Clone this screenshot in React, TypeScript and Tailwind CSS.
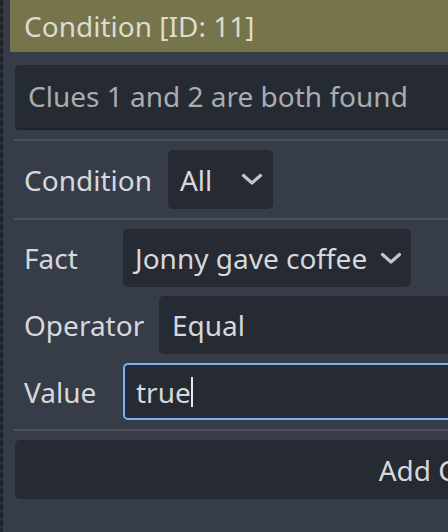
const Chevron = () => (
	<svg width="22" height="13" viewBox="0 0 22 13" fill="none">
		<path d="M2.5 2.5 L11 10 L19.5 2.5" stroke="#c3c5c9" strokeWidth="3.2" strokeLinecap="round" strokeLinejoin="round" />
	</svg>
);

const Row = ({ label, children }: { label: string; children: React.ReactNode }) => (
	<div className="flex items-center mt-[9px] ml-[14px] gap-[16px]">
		<div className="min-w-[83px] text-[#d6d8dc]">{label}</div>
		{children}
	</div>
);

const App = () => {
	return (
		<div className="flex w-[448px] h-[532px] overflow-hidden bg-[#373c49] font-['Noto_Sans',sans-serif] text-[28px]">
			<div className="w-[3px] shrink-0 bg-[repeating-linear-gradient(to_bottom,#22262d_0px,#22262d_7px,#333845_7px,#333845_8px)]"></div>
			<div className="flex flex-col w-[930px] shrink-0 ml-[7px]">
				<div className="h-[52px] flex items-center pl-[14px] bg-[#76744a] text-[#dddbd0]">
					Condition [ID: 11]
				</div>

				<div className="mt-[13px] ml-[5px] h-[65px] flex items-center pl-[13px] pb-[1px] bg-[#262a32] rounded-[4px] border-b-2 border-[#20232a] text-[#a9acb1]">
					Clues 1 and 2 are both found
				</div>

				<div className="mt-[9px] ml-[4px] h-[2px] bg-[#4b515d]"></div>

				<Row label="Condition">
					<div className="w-[105px] h-[59px] flex items-center justify-between pl-[12px] pr-[10px] bg-[#262a32] rounded-[5px] text-[#d6d8dc]">
						<span>All</span>
						<Chevron />
					</div>
				</Row>

				<div className="mt-[9px] ml-[4px] h-[2px] bg-[#4b515d]"></div>

				<Row label="Fact">
					<div className="w-[288px] h-[58px] flex items-center justify-between pl-[12px] pr-[9px] bg-[#262a32] rounded-[5px] text-[#d6d8dc]">
						<span>Jonny gave coffee</span>
						<Chevron />
					</div>
				</Row>

				<div className="flex items-center mt-[9px] ml-[14px]">
					<div className="w-[135px] text-[#d6d8dc]">Operator</div>
					<div className="flex-1 h-[58px] flex items-center pl-[13px] bg-[#262a32] rounded-[5px] text-[#d6d8dc]">
						Equal
					</div>
				</div>

				<Row label="Value">
					<div className="flex-1 h-[57px] flex items-center pl-[11px] bg-[#262a32] rounded-[5px] border-2 border-[#7cb0ec] text-[#d6d8dc]">
						<span>true</span>
						<span className="w-[2px] h-[30px] bg-[#e8e9eb]"></span>
					</div>
				</Row>

				<div className="mt-[9px] ml-[4px] h-[2px] bg-[#4b515d]"></div>

				<div className="mt-[9px] ml-[5px] h-[59px] flex items-center justify-center pr-[10px] bg-[#262a32] rounded-[5px] text-[#d6d8dc]">
					Add Condition
				</div>
			</div>
		</div>
	);
};

export default App;
